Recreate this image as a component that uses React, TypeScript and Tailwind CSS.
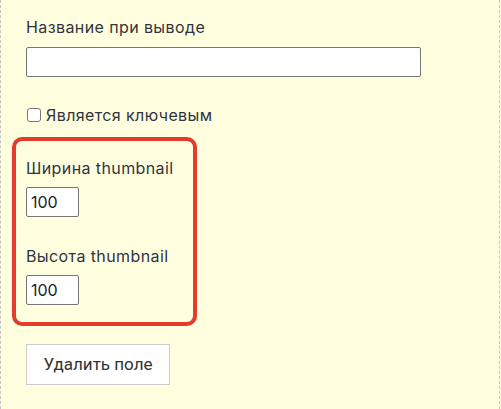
export default function App() {
  return (
    <div className="min-h-[409px] w-[501px] bg-[#ffffe0]">
      <div
        className="h-[409px] w-[500px] border-x border-dashed border-x-[#c4c4c4] pl-[25px] pt-[15px] tracking-[0.4px] text-[#30343f]"
        style={{ fontFamily: "Inter, 'Noto Sans', sans-serif" }}
      >
        <label className="block text-[16px] leading-[24px]">Название при выводе</label>
        <input
          type="text"
          className="mt-[8px] block h-[30px] w-[395px] rounded-[2px] border border-[#767676] bg-white px-1"
        />

        <label className="mt-[26px] flex h-[24px] items-center text-[16px] leading-[24px]">
          <input
            type="checkbox"
            className="ml-px mr-[5px] h-[14px] w-[14px] appearance-none rounded-[3px] border border-[#767676] bg-white"
          />
          Является ключевым
        </label>

        <div className="-ml-[14px] mt-[10px] w-[185px] rounded-[10px] border-4 border-[#e53b2f] pb-[17px] pl-[10px] pt-[15px]">
          <label className="block text-[16px] leading-[24px]">Ширина thumbnail</label>
          <input
            type="text"
            defaultValue="100"
            className="mt-[7px] block h-[30px] w-[53px] rounded-[2px] border border-[#767676] bg-white px-[4px] text-[16px] tracking-normal text-[#222]"
          />
          <label className="mt-[27px] block text-[16px] leading-[24px]">Высота thumbnail</label>
          <input
            type="text"
            defaultValue="100"
            className="mt-[7px] block h-[30px] w-[53px] rounded-[2px] border border-[#767676] bg-white px-[4px] text-[16px] tracking-normal text-[#222]"
          />
        </div>

        <button
          className="mt-[18px] h-[41px] w-[144px] border border-[#cccccc] bg-white text-[17px] tracking-normal text-[#333]"
          style={{ fontFamily: "Roboto, 'Liberation Sans', sans-serif" }}
        >
          Удалить поле
        </button>
      </div>
    </div>
  );
}
